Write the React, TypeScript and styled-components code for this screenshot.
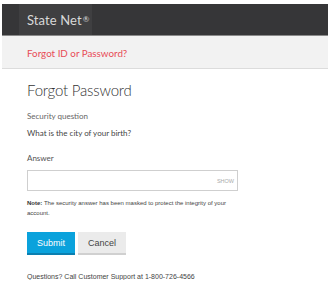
import styled, { createGlobalStyle } from 'styled-components';

const GlobalStyle = createGlobalStyle`
  body {
    margin: 0;
    background: #ffffff;
    font-family: Lato, 'Liberation Sans', sans-serif;
  }
`;

export default function App() {
  return (
    <>
      <GlobalStyle />
      <Page>
        <TopBar>
          <Brand>
            State Net<Reg>®</Reg>
          </Brand>
        </TopBar>
        <SubBar>
          <SubLink href="#">Forgot ID or Password?</SubLink>
        </SubBar>
        <Content>
          <Title>Forgot Password</Title>
          <Label>Security question</Label>
          <Question>What is the city of your birth?</Question>
          <AnswerLabel>Answer</AnswerLabel>
          <InputWrap>
            <Input type="password" />
            <ShowToggle>SHOW</ShowToggle>
          </InputWrap>
          <Note>
            <b>Note:</b> The security answer has been masked to protect the integrity of your
            account.
          </Note>
          <Actions>
            <Button $primary>Submit</Button>
            <Button>Cancel</Button>
          </Actions>
          <Help>Questions? Call Customer Support at 1-800-726-4566</Help>
        </Content>
      </Page>
    </>
  );
}

const Page = styled.div`
  margin: 4px 7px 0 2px;
`;

const TopBar = styled.header`
  height: 31px;
  background: #363638;
  border-bottom: 1px solid #8a8a8a;
  padding-left: 17px;
  display: flex;
`;

const Brand = styled.div`
  background: #3f3f41;
  width: 73px;
  box-sizing: border-box;
  padding-left: 8px;
  display: flex;
  align-items: center;
  color: #d8d8d8;
  font-size: 13px;
  letter-spacing: 0.1px;
`;

const Reg = styled.span`
  font-size: 8px;
  margin-left: 1px;
  position: relative;
  top: -1px;
`;

const SubBar = styled.div`
  height: 32px;
  background: #f2f2f2;
  border-bottom: 1px solid #dcdcdc;
  padding-left: 25px;
  display: flex;
  align-items: center;
`;

const SubLink = styled.a`
  color: #e84c57;
  font-size: 9.8px;
  text-decoration: none;
  margin-top: 1px;
`;

const Content = styled.main`
  padding: 10px 0 0 25px;
  color: #444;
`;

const Title = styled.h1`
  margin: 0 0 9px;
  font-size: 15px;
  font-weight: 300;
  letter-spacing: -0.2px;
  color: #333;
  line-height: 22px;
`;

const Label = styled.div`
  font-size: 8px;
  line-height: 12px;
  color: #666;
  margin-bottom: 5px;
`;

const Question = styled.div`
  font-size: 8px;
  line-height: 12px;
  color: #444;
  margin-bottom: 13px;
`;

const AnswerLabel = styled.div`
  font-size: 8px;
  line-height: 12px;
  color: #555;
  margin-bottom: 6px;
`;

const InputWrap = styled.div`
  width: 211px;
  height: 21px;
  box-sizing: border-box;
  border: 1px solid #cfcfcf;
  display: flex;
  align-items: center;
  background: #fff;
`;

const Input = styled.input`
  flex: 1;
  min-width: 0;
  border: none;
  outline: none;
  height: 100%;
  background: transparent;
`;

const ShowToggle = styled.span`
  font-family: 'Liberation Sans', Arial, sans-serif;
  font-size: 5.5px;
  color: #aaa;
  padding-right: 3px;
  margin-top: 1px;
`;

const Note = styled.p`
  margin: 7px 0 0;
  width: 215px;
  font-family: 'Liberation Sans', Arial, sans-serif;
  font-size: 6px;
  line-height: 10px;
  color: #444;

  b {
    color: #333;
  }
`;

const Actions = styled.div`
  display: flex;
  gap: 3px;
  margin-top: 14px;
`;

const Button = styled.button<{ $primary?: boolean }>`
  width: 48px;
  height: 23px;
  border: none;
  border-bottom: 2px solid ${({ $primary }) => ($primary ? '#0b7fb0' : '#d0d0d0')};
  background: ${({ $primary }) => ($primary ? '#0aa2dc' : '#ebebeb')};
  color: ${({ $primary }) => ($primary ? '#fff' : '#444')};
  font-family: 'Liberation Sans', Arial, sans-serif;
  font-size: 9px;
  padding: 0;
`;

const Help = styled.p`
  margin: 18px 0 0;
  font-family: 'Liberation Sans', Arial, sans-serif;
  font-size: 7px;
  color: #444;
`;
